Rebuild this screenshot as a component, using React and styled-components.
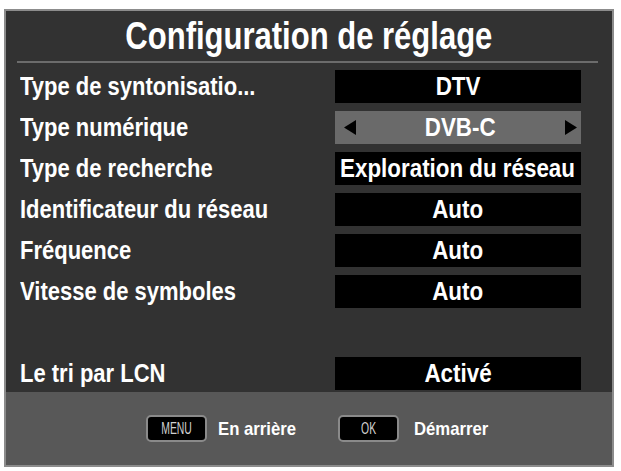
import React from "react";
import styled, { createGlobalStyle } from "styled-components";

const GlobalStyle = createGlobalStyle`
  html, body {
    margin: 0;
    padding: 0;
    background: #ffffff;
  }
  body {
    font-family: "Liberation Sans", Arial, sans-serif;
  }
`;

const Screen = styled.div`
  width: 621px;
  height: 471px;
  padding: 9px 0 0 4px;
  box-sizing: border-box;
`;

const Panel = styled.div`
  width: 610px;
  height: 458px;
  box-sizing: border-box;
  border: 2px solid #8c8c8c;
  background: #323232;
  display: flex;
  flex-direction: column;
`;

// the TV menu font is a condensed grotesque; squeeze Liberation Sans to match
const Narrow = styled.span`
  display: inline-block;
  white-space: nowrap;
  transform: scaleX(${(p) => p.scale || 0.86});
  transform-origin: ${(p) => p.origin || "center"} center;
`;

const Title = styled.h1`
  margin: 0;
  height: 50px;
  display: flex;
  align-items: center;
  justify-content: center;
  color: #ffffff;
  font-size: 38px;
  font-weight: 700;
`;

const Separator = styled.div`
  height: 2px;
  margin: 0 14px 0 11px;
  background: #6c6c6c;
`;

const List = styled.div`
  display: flex;
  flex-direction: column;
  gap: 8px;
  padding: 7px 0 0 14px;
`;

const Row = styled.div`
  display: grid;
  grid-template-columns: 315px 246px;
  height: 33px;
  align-items: center;
`;

const Label = styled.div`
  color: #ffffff;
  font-size: 26px;
  font-weight: 700;
  white-space: nowrap;
`;

const Value = styled.div`
  height: 33px;
  display: flex;
  align-items: center;
  justify-content: ${(p) => (p.selectable ? "space-between" : "center")};
  padding: ${(p) => (p.selectable ? "0 3px 0 8px" : "0")};
  box-sizing: border-box;
  background: ${(p) => (p.active ? "#6a6a6a" : "#000000")};
  color: #ffffff;
  font-size: 26px;
  font-weight: 700;
  white-space: nowrap;
`;

const Arrow = styled.svg`
  width: 14px;
  height: 15px;
  flex: none;
`;

const Footer = styled.div`
  margin-top: auto;
  height: 73px;
  background: #585858;
  display: flex;
  align-items: center;
  padding-left: 140px;
`;

const KeyCap = styled.span`
  width: 61px;
  height: 27px;
  flex: none;
  box-sizing: border-box;
  border: 2px solid #8a8a8a;
  border-radius: 5px;
  background: #000000;
  color: #d0d0d0;
  display: flex;
  align-items: center;
  justify-content: center;
  font-size: 16px;
  font-weight: 400;
  margin-right: ${(p) => p.gap}px;
`;

const Hint = styled.span`
  width: ${(p) => p.width}px;
  flex: none;
  color: #ffffff;
  font-size: 19px;
  font-weight: 700;
  margin-right: ${(p) => p.gap || 0}px;
`;

const rows = [
  { label: "Type de syntonisatio...", value: "DTV" },
  { label: "Type numérique", value: "DVB-C", active: true },
  { label: "Type de recherche", value: "Exploration du réseau" },
  { label: "Identificateur du réseau", value: "Auto" },
  { label: "Fréquence", value: "Auto" },
  { label: "Vitesse de symboles", value: "Auto" },
  null,
  { label: "Le tri par LCN", value: "Activé" },
];

const App = () => (
  <Screen>
    <GlobalStyle />
    <Panel>
      <Title>
        <Narrow scale={0.816}>Configuration de réglage</Narrow>
      </Title>
      <Separator />
      <List>
        {rows.map((r, i) =>
          r ? (
            <Row key={i}>
              <Label>
                <Narrow origin="left" scale={0.846}>
                  {r.label}
                </Narrow>
              </Label>
              {r.active ? (
                <Value active selectable>
                  <Arrow viewBox="0 0 14 15">
                    <polygon points="13,0 13,15 1,7.5" fill="#000" />
                  </Arrow>
                  <Narrow>{r.value}</Narrow>
                  <Arrow viewBox="0 0 14 15">
                    <polygon points="1,0 1,15 13,7.5" fill="#000" />
                  </Arrow>
                </Value>
              ) : (
                <Value>
                  <Narrow>{r.value}</Narrow>
                </Value>
              )}
            </Row>
          ) : (
            <Row key={i} />
          )
        )}
      </List>
      <Footer>
        <KeyCap gap={11}>
          <Narrow scale={0.65}>MENU</Narrow>
        </KeyCap>
        <Hint width={77} gap={43}>
          <Narrow origin="left" scale={0.88}>
            En arrière
          </Narrow>
        </Hint>
        <KeyCap gap={15}>
          <Narrow scale={0.65}>OK</Narrow>
        </KeyCap>
        <Hint width={74}>
          <Narrow origin="left" scale={0.88}>
            Démarrer
          </Narrow>
        </Hint>
      </Footer>
    </Panel>
  </Screen>
);

export default App;
